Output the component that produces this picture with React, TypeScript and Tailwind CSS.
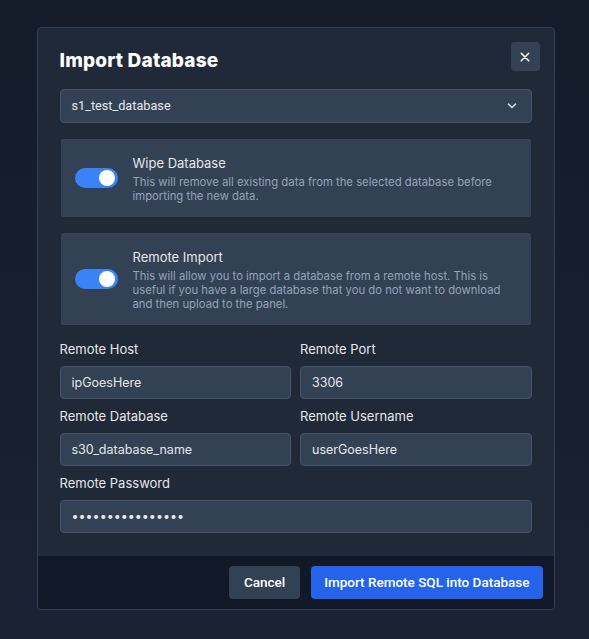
import React from 'react';

const Toggle: React.FC = () => (
  <div className="relative w-[43px] h-[20px] shrink-0 rounded-full bg-[#3b82f6]">
    <div className="absolute right-[3px] top-[2px] w-[16px] h-[16px] rounded-full bg-white" />
  </div>
);

interface OptionCardProps {
  title: string;
  desc: string;
}

const OptionCard: React.FC<OptionCardProps> = ({ title, desc }) => (
  <div className="flex items-center gap-[15px] rounded-[2px] bg-[#334155] pl-[14px] pr-[16px] py-[14px] mx-px">
    <Toggle />
    <div className="flex flex-col">
      <p className="text-[13px] leading-[20px] text-[#e5e7eb]">{title}</p>
      <p className="mt-[2px] text-[11.3px] leading-[14px] text-[#94a3b8]">{desc}</p>
    </div>
  </div>
);

interface FieldProps {
  label: string;
  value: string;
  password?: boolean;
}

const Field: React.FC<FieldProps> = ({ label, value, password }) => (
  <div className="flex flex-col">
    <label className="text-[13px] leading-[20px] text-[#e5e7eb]">{label}</label>
    <input
      readOnly
      type={password ? 'password' : 'text'}
      value={value}
      className="mt-[7px] h-[33px] w-full rounded-[4px] border border-[#475569] bg-[#334155] px-[11px] text-[12.5px] text-[#e5e7eb] outline-none"
    />
  </div>
);

export default function App() {
  return (
    <div className="min-h-screen w-full flex items-center justify-center pl-[2px] pb-[2px] bg-[linear-gradient(180deg,#141b29_0%,#1a2233_100%)] font-['Inter',sans-serif]">
      <div className="w-[518px] flex flex-col rounded-[4px] border border-[#334155] bg-[#1f2937] overflow-hidden">
        {/* 본문 */}
        <div className="flex flex-col px-[22px] pt-[14px] pb-[23px]">
          <div className="flex justify-between items-start">
            <h2 className="mt-[5px] text-[19px] leading-[28px] font-extrabold text-white tracking-[0.2px]">Import Database</h2>
            <button className="w-[29px] h-[29px] mr-[-8px] flex items-center justify-center rounded-[4px] bg-[#334155] text-white">
              <svg width="10" height="10" viewBox="0 0 12 12" fill="none" stroke="currentColor" strokeWidth="1.8" strokeLinecap="round">
                <path d="M1.5 1.5l9 9M10.5 1.5l-9 9" />
              </svg>
            </button>
          </div>

          <div className="mt-[14px] h-[34px] flex items-center justify-between rounded-[4px] border border-[#475569] bg-[#334155] pl-[11px] pr-[14px] font-['Roboto',sans-serif] text-[12.7px] text-[#e5e7eb]">
            <span>s1_test_database</span>
            <svg width="10" height="6" viewBox="0 0 10 6" fill="none" stroke="#cbd5e1" strokeWidth="1.6" strokeLinecap="round" strokeLinejoin="round">
              <path d="M1.5 1.2L5 4.5l3.5-3.3" />
            </svg>
          </div>

          <div className="mt-[16px] flex flex-col gap-[16px]">
            <OptionCard
              title="Wipe Database"
              desc="This will remove all existing data from the selected database before importing the new data."
            />
            <OptionCard
              title="Remote Import"
              desc="This will allow you to import a database from a remote host. This is useful if you have a large database that you do not want to download and then upload to the panel."
            />
          </div>

          <div className="mt-[14px] grid grid-cols-2 gap-x-[9px] gap-y-[7px]">
            <Field label="Remote Host" value="ipGoesHere" />
            <Field label="Remote Port" value="3306" />
            <Field label="Remote Database" value="s30_database_name" />
            <Field label="Remote Username" value="userGoesHere" />
            <div className="col-span-2">
              <Field label="Remote Password" value="abcdefghijklmnop" password />
            </div>
          </div>
        </div>

        {/* 하단 버튼 */}
        <div className="flex justify-end gap-[11px] bg-[#111827] px-[11px] pt-[10px] pb-[10px] font-['Roboto',sans-serif]">
          <button className="h-[33px] w-[71px] rounded-[4px] bg-[#334155] text-[13.5px] font-medium text-white">Cancel</button>
          <button className="h-[33px] px-[13px] rounded-[4px] bg-[#2563eb] text-[13.5px] font-medium text-white">
            Import Remote SQL into Database
          </button>
        </div>
      </div>
    </div>
  );
}
